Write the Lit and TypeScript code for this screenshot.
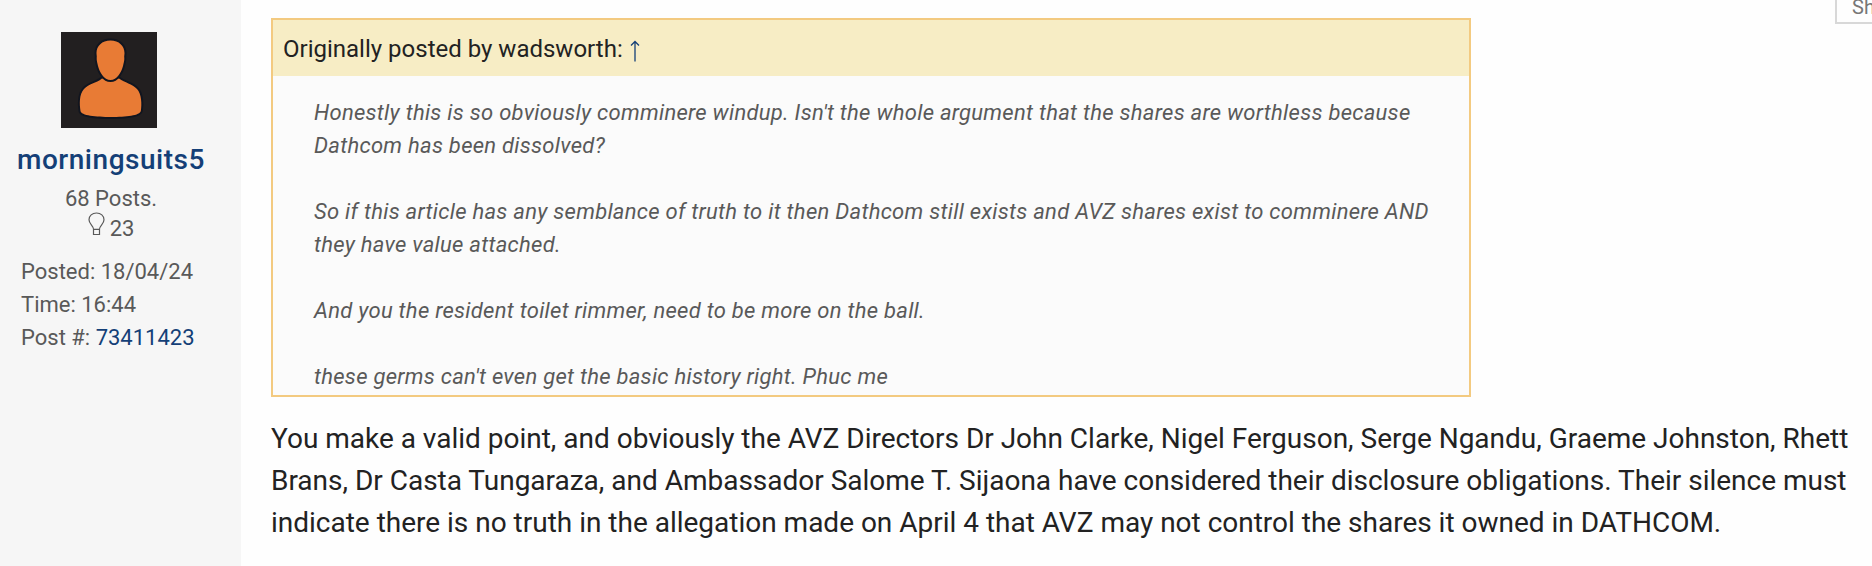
import { LitElement, html, css } from "lit";
import { customElement } from "lit/decorators.js";

@customElement("post-author")
class PostAuthor extends LitElement {
  static styles = css`
    :host { display: flex; flex-direction: column; box-sizing: border-box; width: 241px; flex: none; background: #f6f6f6; color: #595959; font-size: 22px; padding-top: 32px; }
    .top { width: 222px; display: flex; flex-direction: column; align-items: center; }
    .avatar { display: block; margin-right: 4px; }
    .name { margin-top: 15px; font-size: 28px; line-height: 34px; font-weight: 500; letter-spacing: 0.53px; color: #143f77; text-decoration: none; }
    .count { margin-top: 9px; line-height: 26px; height: 28px; }
    .likes { display: flex; line-height: 30px; gap: 5px; height: 30px; }
    .bulb { display: block; margin-top: -2px; }
    .meta { margin: 11px 0 0 21px; line-height: 33px; }
    .meta a { color: #143f77; text-decoration: none; }
  `;
  render() {
    return html`
      <div class="top">
        <svg class="avatar" width="96" height="96" viewBox="0 0 96 96">
          <rect width="96" height="96" fill="#221f20" />
          <g fill="#e87b35" stroke="#11151f" stroke-width="4" paint-order="stroke" stroke-linejoin="round">
            <path d="M41 46.5C35 51.5 28 51.5 23 57C18 62.5 18.5 72 19.5 79C20 83.5 35 85 50 85C65 85 79 83.5 79.8 79C81 72 80.5 62 76 57C71 51.5 64 51 58 46.5Z" />
            <path d="M49.500 8.500C41 8.500 35.500 14 35.500 21C35.500 23 36 24 35.700 26C35.500 29 36.500 31 37 34C38.500 40 43 48 49.500 48C56 48 60.500 40 62 34C62.500 31 63.500 29 63.300 26C63 24 63.500 23 63.500 21C63.500 14 58 8.500 49.500 8.500Z" />
          </g>
        </svg>
        <a class="name">morningsuits5</a>
        <div class="count">68 Posts.</div>
        <div class="likes">
          <svg class="bulb" width="17" height="24" viewBox="0 0 17 24" fill="none" stroke="#595959" stroke-width="1.2">
            <path d="M5.500 17.300C5.500 13.500 1 12 1 7.800C1 3.800 4.200 1 8.500 1C12.800 1 16 3.800 16 7.800C16 12 11.500 13.500 11.500 17.300ZM5.500 17.300V22.500H11.500V17.300" />
          </svg>
          <span>23</span>
        </div>
      </div>
      <div class="meta">
        <div>Posted: 18/04/24</div>
        <div>Time: 16:44</div>
        <div>Post #: <a>73411423</a></div>
      </div>
    `;
  }
}

@customElement("post-quote")
class PostQuote extends LitElement {
  static styles = css`
    :host { display: block; box-sizing: border-box; width: 1200px; height: 379px; border: 2px solid #f3ca80; background: #fbfbfb; overflow: hidden; }
    .head { display: flex; align-items: center; gap: 7px; height: 56px; padding-left: 10px; background: #f7edc5; color: #222; font-size: 24px; }
    .head span { margin-top: 2px; }
    .arrow { display: block; margin-top: 6px; }
    .body { padding: 20px 20px 0 41px; color: #595959; font-size: 22px; line-height: 33px; font-style: italic; letter-spacing: 0.273px; }
    p { margin: 0 0 33px; }
  `;
  render() {
    return html`
      <div class="head">
        <span>Originally posted by wadsworth:</span>
        <svg class="arrow" width="10" height="22" viewBox="0 0 10 22" fill="none" stroke="#143f77" stroke-width="1.300">
          <path d="M5 21.500V1.500M1 5.500L5 1.500L9 5.500" />
        </svg>
      </div>
      <div class="body">
        <p>Honestly this is so obviously comminere windup. Isn't the whole argument that the shares are worthless because<br />Dathcom has been dissolved?</p>
        <p>So if this article has any semblance of truth to it then Dathcom still exists and AVZ shares exist to comminere AND<br />they have value attached.</p>
        <p>And you the resident toilet rimmer, need to be more on the ball.</p>
        <p>these germs can't even get the basic history right. Phuc me</p>
      </div>
    `;
  }
}

@customElement("app-root")
class AppRoot extends LitElement {
  static styles = css`
    :host { display: flex; width: 1872px; height: 566px; overflow: hidden; background: #fefefe; font-family: Roboto, "Liberation Sans", sans-serif; }
    .content { position: relative; flex: 1; min-width: 0; padding: 18px 24px 0 30px; }
    .message { margin: 21px 0 0; color: #222; font-size: 28px; line-height: 42px; letter-spacing: -0.008px; white-space: nowrap; }
    .share { position: absolute; box-sizing: border-box; right: -40px; top: -30px; width: 77px; height: 54px; border: 2px solid #d8d8d8; color: #777; font-size: 20px; line-height: 24px; padding: 23px 0 0 15px; }
  `;
  render() {
    return html`
      <post-author></post-author>
      <main class="content">
        <post-quote></post-quote>
        <p class="message">You make a valid point, and obviously the AVZ Directors Dr John Clarke, Nigel Ferguson, Serge Ngandu, Graeme Johnston, Rhett<br />Brans, Dr Casta Tungaraza, and Ambassador Salome T. Sijaona have considered their disclosure obligations. Their silence must<br />indicate there is no truth in the allegation made on April 4 that AVZ may not control the shares it owned in DATHCOM.</p>
        <div class="share">Share</div>
      </main>
    `;
  }
}
